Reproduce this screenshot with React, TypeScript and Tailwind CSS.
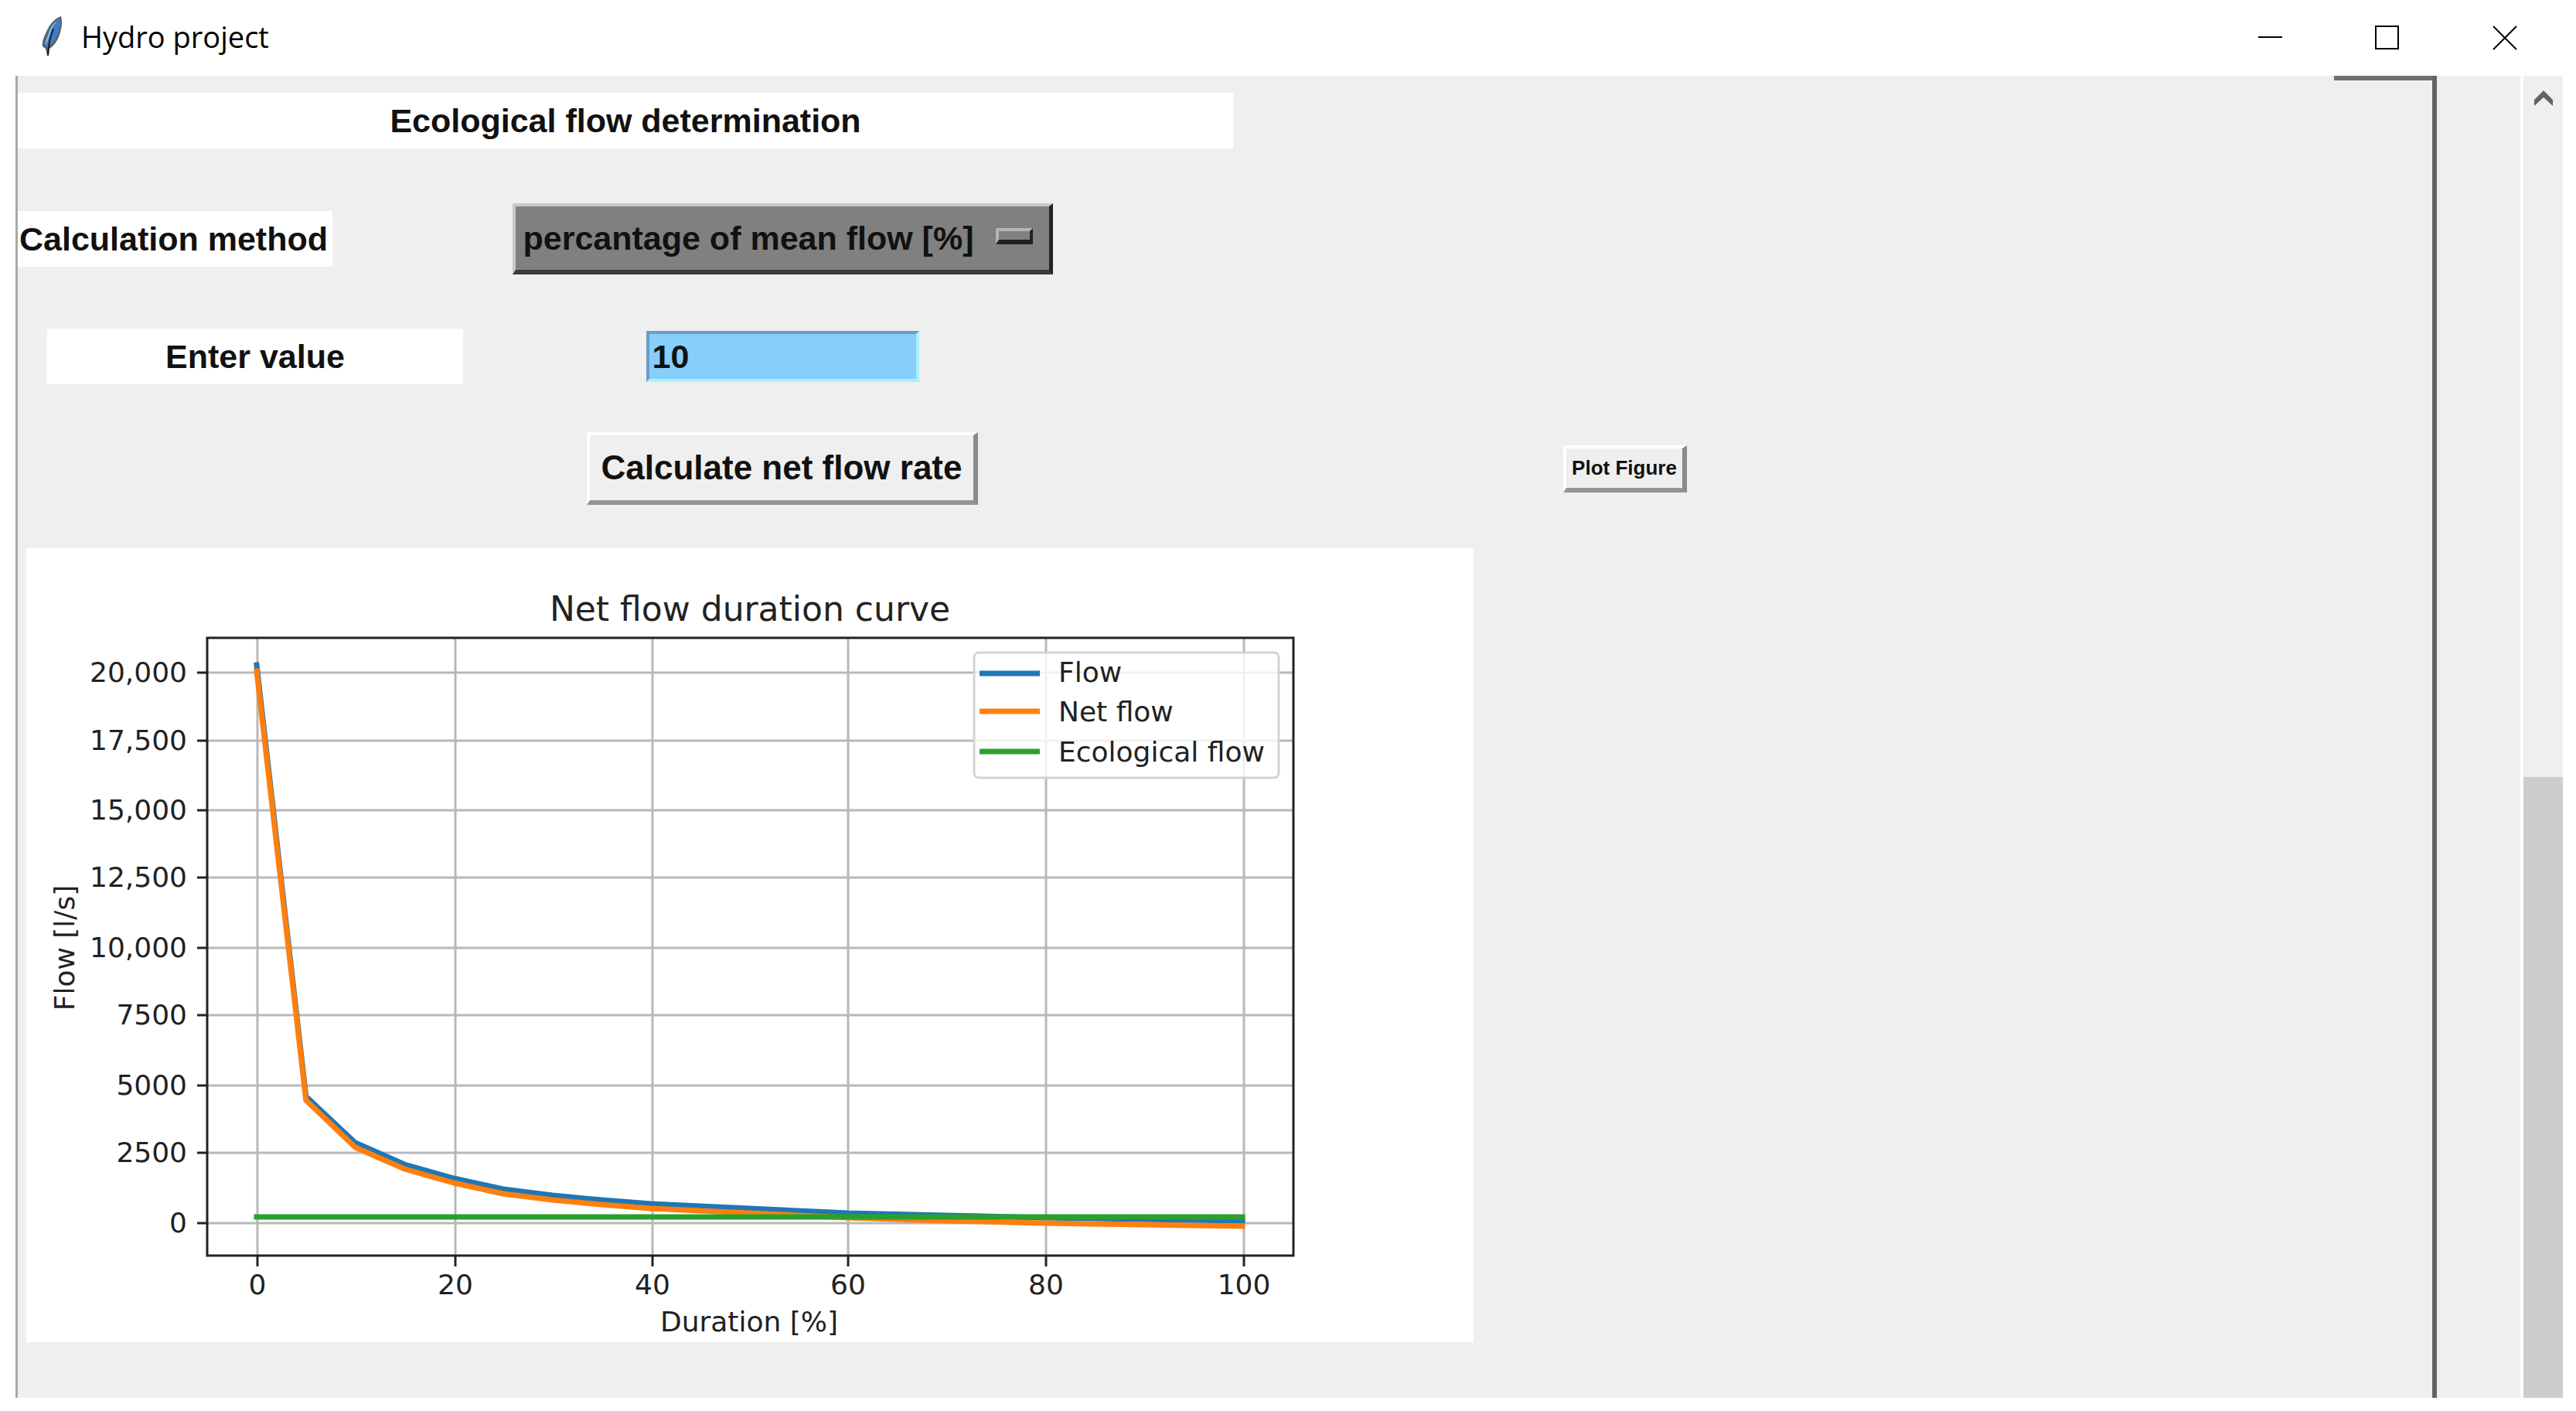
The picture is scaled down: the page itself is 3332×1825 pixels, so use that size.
import { useState } from "react";
import type { ReactNode } from "react";

type Point = [number, number];

const X_TICKS = [
  { label: "0", x: 299 },
  { label: "20", x: 555 },
  { label: "40", x: 810 },
  { label: "60", x: 1063 },
  { label: "80", x: 1319 },
  { label: "100", x: 1575 },
];

const Y_TICKS = [
  { label: "20,000", y: 161 },
  { label: "17,500", y: 249 },
  { label: "15,000", y: 339 },
  { label: "12,500", y: 426 },
  { label: "10,000", y: 517 },
  { label: "7500", y: 604 },
  { label: "5000", y: 695 },
  { label: "2500", y: 782 },
  { label: "0", y: 873 },
];

// [duration %, vertical position in the figure]
const FLOW: Point[] = [
  [0, 151], [5, 709], [10, 769], [15, 797], [20, 815], [25, 829], [30, 837],
  [35, 843], [40, 848], [50, 854], [60, 860], [70, 863], [80, 866], [100, 870],
];
const NET_FLOW: Point[] = [
  [0, 159], [5, 714], [10, 775], [15, 803], [20, 821], [25, 835], [30, 843],
  [35, 849], [40, 854], [50, 860], [60, 866], [70, 870], [80, 873], [100, 877],
];
const ECO_FLOW: Point[] = [[0, 865], [100, 865]];

const SERIES = [
  { name: "Flow", color: "#1f77b4", points: FLOW, lineY: 162, textY: 173 },
  { name: "Net flow", color: "#ff7f0e", points: NET_FLOW, lineY: 211, textY: 224 },
  { name: "Ecological flow", color: "#2ca02c", points: ECO_FLOW, lineY: 263, textY: 276 },
];

function toPoints(points: Point[]) {
  return points.map(([d, y]) => `${298 + d * 12.75},${y}`).join(" ");
}

/** Net flow duration curve, drawn in figure pixels. */
function FlowChart() {
  return (
    <svg
      viewBox="0 0 1872 1027"
      className="block w-[1872px] bg-white font-['DejaVu_Sans',sans-serif] font-normal"
      role="img"
      aria-label="Net flow duration curve"
    >
      {/* grid and ticks */}
      {X_TICKS.map((t) => (
        <g key={t.label}>
          <line x1={t.x} x2={t.x} y1={116} y2={915} stroke="#b8b8b8" strokeWidth={3} />
          <line x1={t.x} x2={t.x} y1={915} y2={929} stroke="#222" strokeWidth={3} />
          <text x={t.x} y={965} textAnchor="middle" fontSize={36} fill="#222">
            {t.label}
          </text>
        </g>
      ))}
      {Y_TICKS.map((t) => (
        <g key={t.label}>
          <line x1={234} x2={1640} y1={t.y} y2={t.y} stroke="#b8b8b8" strokeWidth={3} />
          <line x1={221} x2={234} y1={t.y} y2={t.y} stroke="#222" strokeWidth={3} />
          <text x={208} y={t.y + 12} textAnchor="end" fontSize={36} fill="#222">
            {t.label}
          </text>
        </g>
      ))}

      {SERIES.map((s) => (
        <polyline
          key={s.name}
          points={toPoints(s.points)}
          fill="none"
          stroke={s.color}
          strokeWidth={7}
          strokeLinecap="square"
          strokeLinejoin="round"
        />
      ))}
      <rect x={234} y={116} width={1405} height={799} fill="none" stroke="#222" strokeWidth={3} />

      {/* titles */}
      <text x={936} y={94} textAnchor="middle" fontSize={44} fill="#222">
        Net flow duration curve
      </text>
      <text x={935} y={1013} textAnchor="middle" fontSize={36} fill="#222">
        Duration [%]
      </text>
      <text transform="translate(62 517) rotate(-90)" textAnchor="middle" fontSize={36} fill="#222">
        Flow [l/s]
      </text>

      {/* legend */}
      <rect
        x={1226}
        y={135}
        width={394}
        height={162}
        rx={6}
        fill="#fff"
        fillOpacity={0.8}
        stroke="#d4d4d4"
        strokeWidth={3}
      />
      {SERIES.map((s) => (
        <g key={s.name}>
          <line x1={1233} x2={1311} y1={s.lineY} y2={s.lineY} stroke={s.color} strokeWidth={7} />
          <text x={1335} y={s.textY} fontSize={36} fill="#222">
            {s.name}
          </text>
        </g>
      ))}
    </svg>
  );
}

function FeatherIcon() {
  return (
    <svg viewBox="0 0 27 52" className="h-[52px] w-[27px]" aria-hidden>
      <path
        d="M25 0C18 2 11 9 7 18C3 26 0 33 1 39L5 42L7 51L9 51L10 42C15 39 20 33 23 24C26 16 27 7 25 0Z"
        fill="#5b6067"
      />
      <path d="M23 3C16 7 11 13 8 22C5 29 3 34 4 38L8 40C14 36 19 29 21 22C24 14 25 8 23 3Z" fill="#3f7cc4" />
      <path d="M19 6C13 11 10 18 8 25C6 30 5 34 5 37C9 31 10 24 13 17C15 12 18 9 19 6Z" fill="#8dbbe8" />
      <path d="M15 16C12 24 9 32 8 51" fill="none" stroke="#15202e" strokeWidth={2} />
    </svg>
  );
}

function TitleBar() {
  return (
    <header className="flex h-[98px] shrink-0 items-center bg-white pr-[76px] pb-1 pl-[54px]">
      <FeatherIcon />
      <h1 className="ml-6 font-['Open_Sans',sans-serif] text-[38px] leading-[48px] text-black">
        Hydro project
      </h1>
      <div className="ml-auto flex gap-[120px] pt-1">
        <button type="button" aria-label="Minimize" className="h-8 w-8">
          <svg viewBox="0 0 32 32" className="h-8 w-8" stroke="#000" strokeWidth={2}>
            <path d="M1 15H32" />
          </svg>
        </button>
        <button type="button" aria-label="Maximize" className="h-8 w-8">
          <svg viewBox="0 0 32 32" className="h-8 w-8" fill="none" stroke="#000" strokeWidth={2}>
            <path d="M1 1H30V30H1Z" />
          </svg>
        </button>
        <button type="button" aria-label="Close" className="h-8 w-8">
          <svg viewBox="0 0 32 32" className="h-8 w-8" stroke="#000" strokeWidth={2}>
            <path d="M1 1L31 31M31 1L1 31" />
          </svg>
        </button>
      </div>
    </header>
  );
}

function RaisedButton({ children, className }: { children: ReactNode; className: string }) {
  return (
    <button
      type="button"
      className={`border-t-4 border-r-[6px] border-b-[6px] border-l-4 border-t-white border-r-[#8a8a8a] border-b-[#949494] border-l-white bg-[#efefef] font-bold whitespace-nowrap ${className}`}
    >
      {children}
    </button>
  );
}

function ScrollBar() {
  return (
    <div className="flex w-[55px] flex-col border-l-4 border-white bg-[#efefef]">
      <button type="button" aria-label="Scroll up" className="flex h-[58px] items-center justify-center">
        <svg viewBox="0 0 24 20" className="h-5 w-6" aria-hidden>
          <path d="M0 12L12 0L24 12V20L12 9L0 20Z" fill="#646464" />
        </svg>
      </button>
      <div className="flex-[850]" />
      <div className="flex-[804] bg-[#cdcdcd]" />
    </div>
  );
}

export default function App() {
  const [method, setMethod] = useState("mean");
  const [value, setValue] = useState("10");

  return (
    <div className="flex min-h-screen flex-col bg-white pb-[17px]">
      <TitleBar />
      <main className="mr-[17px] ml-5 flex flex-1 bg-[#efefef] font-['Liberation_Sans',Arial,sans-serif] text-[43px] leading-[72px] font-bold text-[#111]">
        <section className="flex-1 border-r-[6px] border-l-[3px] border-r-[#646464] border-l-[#a9a9a9]">
          <div className="ml-auto h-1.5 w-[127px] bg-[#707070]" />
          <h2 className="mt-4 w-[1572px] bg-white text-center">Ecological flow determination</h2>

          <form className="mt-[71px] grid grid-cols-[614px_750px_1430px] items-center">
            <label htmlFor="method" className="w-[407px] bg-white px-0.5">
              Calculation method
            </label>
            <div className="relative justify-self-center">
              <select
                id="method"
                value={method}
                onChange={(e) => setMethod(e.target.value)}
                className="block h-[92px] w-[699px] appearance-none border-t-4 border-r-[5px] border-b-[6px] border-l-4 border-t-[#c8c8c8] border-r-[#222] border-b-[#3a3a3a] border-l-[#c8c8c8] bg-[#808080] pl-2.5"
              >
                <option value="mean">percantage of mean flow [%]</option>
              </select>
              <span className="pointer-events-none absolute top-8 right-[26px] h-[21px] w-[48px] border-t-4 border-r-4 border-b-[6px] border-l-4 border-t-[#b4b4b4] border-r-[#222] border-b-[#222] border-l-[#b4b4b4] bg-[#808080]" />
            </div>

            <label htmlFor="value" className="col-start-1 mt-[70px] w-[538px] justify-self-center bg-white text-center">
              Enter value
            </label>
            <input
              id="value"
              type="text"
              value={value}
              onChange={(e) => setValue(e.target.value)}
              className="mt-[70px] h-[66px] w-[353px] justify-self-center border-4 border-t-[#6a9dc2] border-r-[#a9f0ff] border-b-[#a9f0ff] border-l-[#6a9dc2] bg-[#87cefa] pl-1"
            />

            <RaisedButton className="col-start-2 mt-[62px] h-[94px] w-[506px] justify-self-center text-[44px]">
              Calculate net flow rate
            </RaisedButton>
            <RaisedButton className="mt-[62px] h-[61px] w-[160px] justify-self-center text-[26px] leading-8">
              Plot Figure
            </RaisedButton>
          </form>

          <figure className="mt-14 ml-[11px]">
            <FlowChart />
          </figure>
        </section>
        <div className="w-[108px]" />
        <ScrollBar />
      </main>
    </div>
  );
}
